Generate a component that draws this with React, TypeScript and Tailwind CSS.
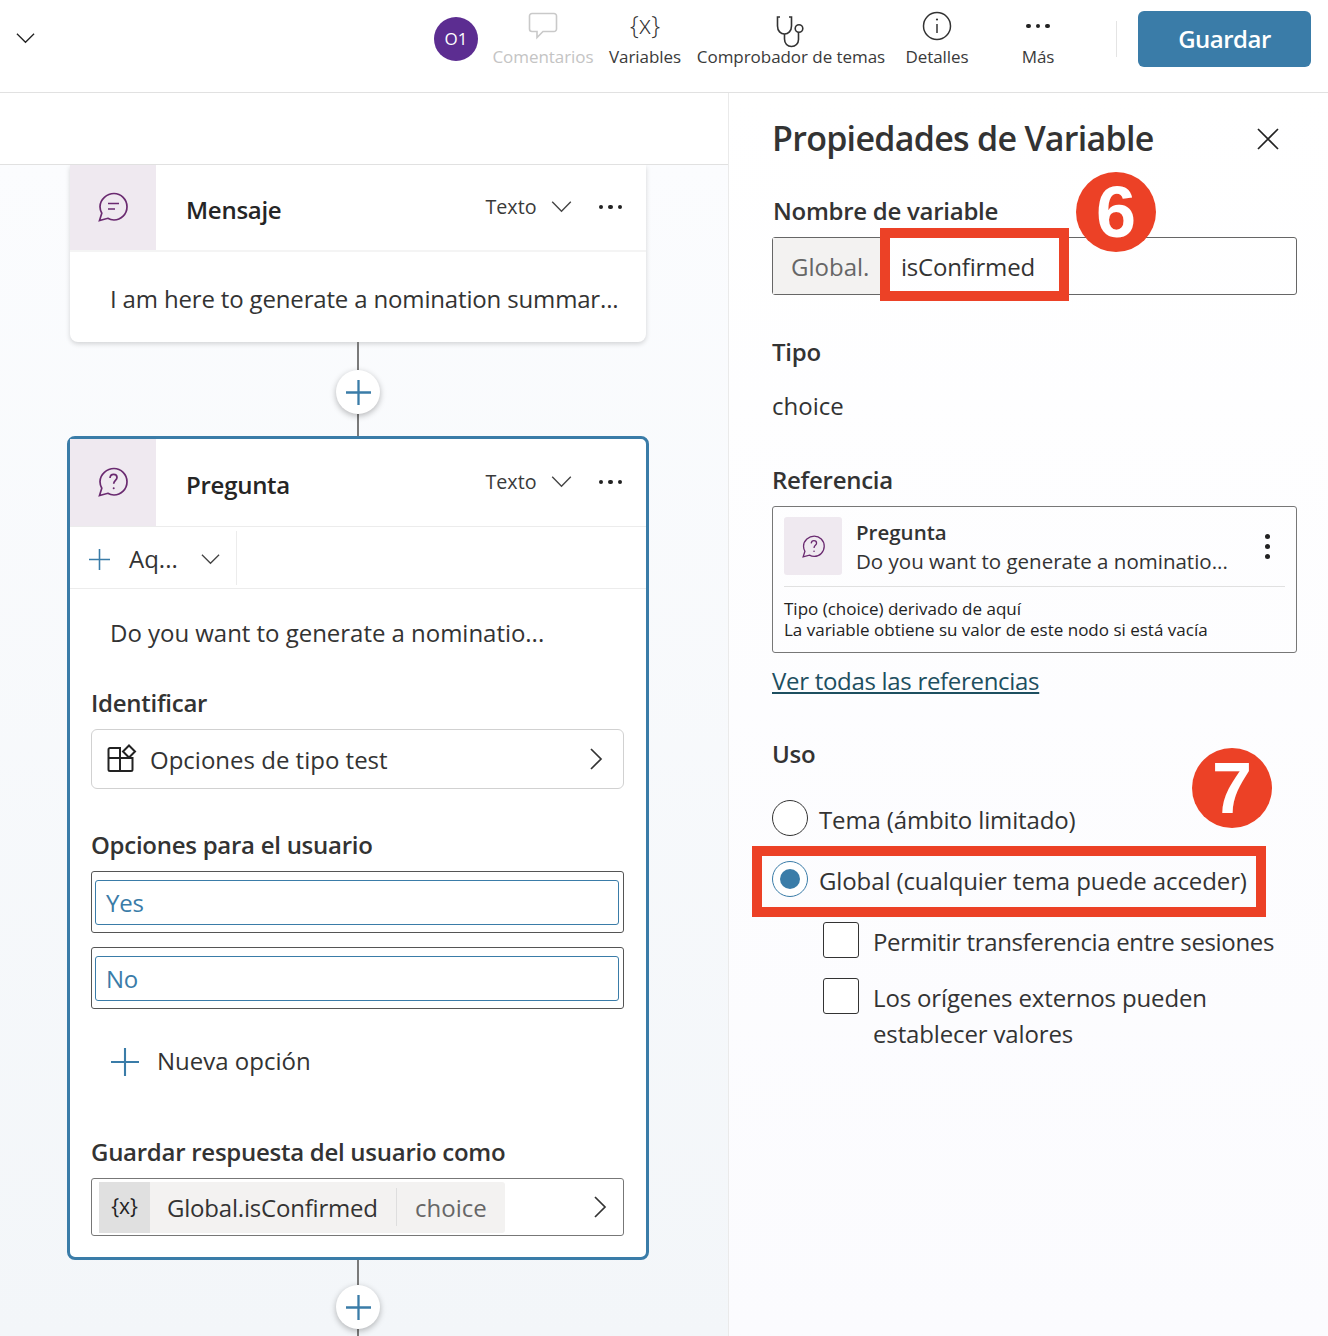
import React from 'react';

const Chevron: React.FC<{ className?: string }> = ({ className }) => (
  <svg viewBox="0 0 24 14" className={className} fill="none" stroke="currentColor" strokeWidth="1.5">
    <path d="M2 2l10 10L22 2" />
  </svg>
);

const ChevronRight: React.FC = () => (
  <svg viewBox="0 0 14 24" className="w-[14px] h-[24px] text-[#333]" fill="none" stroke="currentColor" strokeWidth="1.7">
    <path d="M2 2l10 10L2 22" />
  </svg>
);

const Plus: React.FC<{ className?: string; sw?: string }> = ({ className, sw }) => (
  <svg viewBox="0 0 24 24" className={className} fill="none" stroke="#3a7ca8" strokeWidth={sw ?? '1.8'}>
    <path d="M12 0v24M0 12h24" />
  </svg>
);

const Dots: React.FC = () => (
  <div className="flex gap-[5px]">
    <span className="w-[4.5px] h-[4.5px] rounded-full bg-[#222]" />
    <span className="w-[4.5px] h-[4.5px] rounded-full bg-[#222]" />
    <span className="w-[4.5px] h-[4.5px] rounded-full bg-[#222]" />
  </div>
);

const Bubble: React.FC<{ className?: string; kind: 'msg' | 'ask' }> = ({ className, kind }) => (
  <svg viewBox="0 0 30 30" className={className} fill="none" stroke="#6a2a70" strokeWidth="1.7">
    <path d="M16 1.5c7 0 13 5.8 13 13.2S23 28 16 28c-2.400 0-4.400-.6-6.200-1.700L1.500 28.500l2.300-7.300C2.700 19.300 2 17 2 14.700 2 7.300 9 1.500 16 1.500z" />
    {kind === 'msg' ? (
      <path d="M10 11.500h11M10 17h7" />
    ) : (
      <>
        <path d="M12 11c.2-2.200 1.800-3.600 3.600-3.600 2 0 3.400 1.400 3.400 3.200 0 2.800-3.300 3-3.300 6.200" />
        <circle cx="15.700" cy="21.200" r="1" fill="#6a2a70" stroke="none" />
      </>
    )}
  </svg>
);

const AddButton: React.FC = () => (
  <div className="relative z-10 w-[44px] h-[44px] rounded-full bg-white flex items-center justify-center shadow-[0_2px_6px_rgba(0,0,0,0.28)]">
    <Plus className="w-[25px] h-[25px]" sw="2.200" />
  </div>
);

const Connector: React.FC<{ h: string }> = ({ h }) => <div className={`w-[2px] bg-[#7a7a7a] ${h}`} />;

const ToolItem: React.FC<{ label: string; icon: React.ReactNode; className: string; muted?: boolean }> = ({ label, icon, className, muted }) => (
  <div className={`flex flex-col items-center ${className}`}>
    <div className="h-[36px] mt-[8px] flex items-center justify-center">{icon}</div>
    <span className={`mt-[2px] text-[17px] leading-[22px] tracking-[-0.05px] whitespace-nowrap ${muted ? 'text-[#c4c4c4]' : 'text-[#3a3a3a]'}`}>{label}</span>
  </div>
);

const CardHeader: React.FC<{ title: string; kind: 'msg' | 'ask'; h: string }> = ({ title, kind, h }) => (
  <div className={`flex items-stretch ${h}`}>
    <div className="w-[86px] bg-[#efe9f0] flex items-center justify-center pb-[2px]">
      <Bubble kind={kind} className="w-[30px] h-[30px]" />
    </div>
    <div className="flex-1 flex items-center justify-between pl-[30px] pr-[24px]">
      <span className="text-[24px] font-semibold tracking-[-0.27px] text-[#252525] mt-[4px]">{title}</span>
      <div className="flex items-center mb-[1px]">
        <span className="text-[19.700px] text-[#3a3a3a]">Texto</span>
        <Chevron className="w-[23px] h-[13px] ml-[13px] text-[#444]" />
        <div className="ml-[26px]"><Dots /></div>
      </div>
    </div>
  </div>
);

const SectionLabel: React.FC<{ children: React.ReactNode; className?: string }> = ({ children, className }) => (
  <div className={`text-[24px] leading-[32px] font-semibold tracking-[-0.27px] text-[#333] ${className ?? ''}`}>{children}</div>
);

const OptionInput: React.FC<{ value: string; className?: string }> = ({ value, className }) => (
  <div className={`h-[62px] border border-[#555] rounded-[3px] flex items-center pl-[3px] pr-[4px] ${className ?? ''}`}>
    <div className="flex-1 h-[45px] border border-[#3a7ca8] rounded-[3px] pl-[10px] pt-[1px] flex items-center text-[24px] tracking-[-0.2px] text-[#3a7ca8]">{value}</div>
  </div>
);

const Radio: React.FC<{ on?: boolean }> = ({ on }) => (
  <span className={`w-[36px] h-[36px] shrink-0 rounded-full border flex items-center justify-center bg-white ${on ? 'border-[#3a7ca8]' : 'border-[#333]'}`}>
    {on && <span className="w-[20px] h-[20px] rounded-full bg-[#3a7ca8]" />}
  </span>
);

const Check: React.FC = () => <span className="w-[36px] h-[36px] shrink-0 rounded-[3px] border border-[#333] bg-white" />;

const Badge: React.FC<{ n: string; className: string }> = ({ n, className }) => (
  <div className={`absolute w-[80px] h-[80px] rounded-full bg-[#ec4126] text-white flex items-center justify-center font-['Liberation_Sans'] font-bold text-[72px] leading-none ${className}`}>
    {n}
  </div>
);

export default function App() {
  return (
    <div className="w-[1328px] h-[1336px] overflow-hidden flex flex-col bg-white font-['Open_Sans','Noto_Sans',sans-serif] text-[#333]">
      {/* top bar */}
      <header className="h-[93px] shrink-0 border-b border-[#e1e1e1] flex items-start">
        <Chevron className="w-[21px] h-[12px] mt-[32px] ml-[15px] text-[#222]" />
        <div className="ml-[398px] mt-[17px] w-[44px] h-[44px] rounded-full bg-[#5c2d91] text-white flex items-center justify-center text-[17px]">O1</div>
        <ToolItem
          muted
          label="Comentarios"
          className="w-[102px] ml-[14px]"
          icon={
            <svg viewBox="0 0 30 28" className="w-[30px] h-[28px]" fill="none" stroke="#c9c9c9" strokeWidth="1.6">
              <path d="M4 1.500h22a2.500 2.500 0 0 1 2.500 2.500v13a2.500 2.500 0 0 1-2.500 2.500H15l-6 6v-6H4A2.500 2.500 0 0 1 1.500 17V4A2.500 2.500 0 0 1 4 1.500z" />
            </svg>
          }
        />
        <ToolItem
          label="Variables"
          className="w-[72px] ml-[15px]"
          icon={<span className="text-[25px] leading-none text-[#333] mb-[4px] font-light">{'{x}'}</span>}
        />
        <ToolItem
          label="Comprobador de temas"
          className="w-[190px] ml-[15px]"
          icon={
            <svg viewBox="0 0 32 34" className="w-[32px] h-[34px] mt-[12px]" fill="none" stroke="#333" strokeWidth="1.6">
              <path d="M5 2H2.500v9c0 5 3.200 8 7 8s7-3 7-8V2H14" />
              <path d="M9.500 19v5c0 4.500 3 7.500 7 7.500s7-3 7-7V17" />
              <circle cx="24" cy="13.500" r="3.800" />
            </svg>
          }
        />
        <ToolItem
          label="Detalles"
          className="w-[64px] ml-[19px]"
          icon={
            <svg viewBox="0 0 30 30" className="w-[30px] h-[30px]" fill="none" stroke="#333" strokeWidth="1.5">
              <circle cx="15" cy="15" r="13.500" />
              <path d="M15 13v9" />
              <circle cx="15" cy="8.500" r="1.100" fill="#333" stroke="none" />
            </svg>
          }
        />
        <ToolItem label="Más" className="w-[40px] ml-[49px]" icon={<Dots />} />
        <div className="w-px h-[36px] bg-[#e4e4e4] mt-[21px] ml-[58px]" />
        <div className="ml-[21px] mt-[11px] w-[173px] h-[56px] rounded-[6px] bg-[#3a7ca8] text-white flex items-center justify-center text-[24px] font-semibold tracking-[-0.5px]">Guardar</div>
      </header>

      <div className="flex-1 flex min-h-0">
        {/* authoring canvas */}
        <main className="w-[729px] shrink-0 border-r border-[#eaeaea] flex flex-col">
          <div className="h-[72px] shrink-0 border-b border-[#e1e1e1]" />
          <div className="flex-1 overflow-hidden bg-linear-to-b from-[#fbfcfe] to-[#f3f6f9] pl-[67px] w-[728px]">
            <div className="w-[582px] flex flex-col items-center">
              <section className="w-[576px] h-[177px] bg-white rounded-b-[8px] shadow-[0_2px_5px_rgba(0,0,0,0.16)] flex flex-col">
                <CardHeader title="Mensaje" kind="msg" h="h-[85px]" />
                <div className="border-t-2 border-[#f4f4f4] flex-1 pl-[40px] pt-[30px] text-[24px] leading-[34px] tracking-[-0.16px] text-[#333] whitespace-nowrap">I am here to generate a nomination summar...</div>
              </section>
              <Connector h="h-[28px]" />
              <AddButton />
              <Connector h="h-[23px]" />
              <section className="w-[582px] h-[824px] -mt-px border-[3px] border-[#3a7ca8] rounded-[8px] bg-white flex flex-col">
                <CardHeader title="Pregunta" kind="ask" h="h-[87px]" />
                <div className="h-[63px] border-y border-[#ececec] flex items-center">
                  <div className="w-[167px] h-[54px] border-r border-[#ececec] flex items-center pl-[19px] pt-[3px]">
                    <Plus className="w-[21px] h-[21px]" />
                    <span className="ml-[19px] text-[24px] text-[#333]">Aq...</span>
                    <Chevron className="w-[21px] h-[12px] ml-[22px] text-[#444]" />
                  </div>
                </div>
                <div className="pl-[40px] pt-[27px] text-[24px] leading-[34px] tracking-[-0.03px] text-[#333]">Do you want to generate a nominatio...</div>
                <div className="pl-[21px] pr-[22px]">
                  <SectionLabel className="mt-[37px]">Identificar</SectionLabel>
                  <div className="mt-[10px] h-[60px] border border-[#d1d1d1] rounded-[6px] flex items-center pl-[15px] pr-[20px]">
                    <svg viewBox="0 0 30 30" className="w-[30px] h-[30px]" fill="none" stroke="#222" strokeWidth="2">
                      <path d="M3 4h10v10H3a1.500 1.500 0 0 1-1.500-1.500V5.500A1.500 1.500 0 0 1 3 4zM1.500 14H13v13H3a1.500 1.500 0 0 1-1.500-1.500zM13 14h12.500v11.500A1.500 1.500 0 0 1 24 27H13z" />
                      <path d="M22 1.500l6 6-6 6-6-6z" />
                    </svg>
                    <span className="ml-[13px] pt-[2px] text-[24px] flex-1 text-[#333]">Opciones de tipo test</span>
                    <ChevronRight />
                  </div>
                  <SectionLabel className="mt-[40px]">Opciones para el usuario</SectionLabel>
                  <OptionInput value="Yes" className="mt-[10px]" />
                  <OptionInput value="No" className="mt-[14px]" />
                  <div className="mt-[35px] h-[36px] flex items-center pl-[20px]">
                    <Plus className="w-[28px] h-[28px]" />
                    <span className="ml-[18px] pb-[2px] text-[24px] text-[#333]">Nueva opción</span>
                  </div>
                  <SectionLabel className="mt-[56px]">Guardar respuesta del usuario como</SectionLabel>
                  <div className="mt-[10px] h-[58px] border border-[#777] rounded-[3px] flex items-center pl-[7px] pr-[16px]">
                    <div className="h-[51px] w-[406px] rounded-[3px] bg-[#f3f2f1] flex items-center">
                      <div className="w-[51px] h-full bg-[#e0e0e0] flex items-center justify-center text-[21px] text-[#222]">{'{x}'}</div>
                      <span className="ml-[17px] w-[229px] pt-[2px] text-[24px] tracking-[-0.2px] text-[#333]">Global.isConfirmed</span>
                      <div className="w-px h-[38px] bg-[#dedede]" />
                      <span className="ml-[18px] pt-[2px] text-[24px] text-[#666]">choice</span>
                    </div>
                    <div className="ml-auto"><ChevronRight /></div>
                  </div>
                </div>
              </section>
              <Connector h="h-[25px]" />
              <AddButton />
              <Connector h="h-[20px]" />
            </div>
          </div>
        </main>

        {/* variable properties pane */}
        <aside className="relative flex-1 bg-linear-to-b from-white to-[#fbfbfe] pl-[43px] pr-[31px]">
          <div className="flex items-center justify-between pt-[21px]">
            <h1 className="text-[34px] leading-[48px] font-semibold tracking-[-0.72px] text-[#333]">Propiedades de Variable</h1>
            <svg viewBox="0 0 24 24" className="w-[24px] h-[24px] mr-[17px] mt-[2px]" fill="none" stroke="#222" strokeWidth="1.700">
              <path d="M2 2l20 20M22 2L2 22" />
            </svg>
          </div>
          <SectionLabel className="mt-[33px] pl-[1px]">Nombre de variable</SectionLabel>
          <div className="mt-[10px] h-[58px] border border-[#666] rounded-[3px] flex items-stretch">
            <div className="w-[108px] bg-[#f3f2f1] flex items-center pl-[18px] pt-[2px] text-[24px] text-[#666]">Global.</div>
            <div className="pl-[20px] pt-[2px] flex items-center text-[24px] tracking-[-0.2px] text-[#333]">isConfirmed</div>
          </div>

          <SectionLabel className="mt-[41px]">Tipo</SectionLabel>
          <div className="mt-[22px] text-[24px] leading-[32px] text-[#333]">choice</div>

          <SectionLabel className="mt-[42px]">Referencia</SectionLabel>
          <div className="mt-[10px] h-[147px] border border-[#777] rounded-[3px] px-[11px] pt-[10px]">
            <div className="flex h-[58px]">
              <div className="w-[58px] rounded-[3px] bg-[#efe9f0] flex items-center justify-center">
                <Bubble kind="ask" className="w-[23px] h-[23px]" />
              </div>
              <div className="ml-[14px] flex-1 mt-[1px]">
                <div className="text-[20.500px] leading-[29px] font-semibold text-[#333]">Pregunta</div>
                <div className="text-[20.500px] leading-[29px] text-[#333]">Do you want to generate a nominatio...</div>
              </div>
              <div className="flex flex-col gap-[5px] mt-[17px] mr-[15px]">
                <span className="w-[5px] h-[5px] rounded-full bg-[#222]" />
                <span className="w-[5px] h-[5px] rounded-full bg-[#222]" />
                <span className="w-[5px] h-[5px] rounded-full bg-[#222]" />
              </div>
            </div>
            <div className="mt-[11px] border-t border-[#e1e1e1] pt-[11px] text-[17px] leading-[21px] text-[#222]">
              <div>Tipo (choice) derivado de aquí</div>
              <div>La variable obtiene su valor de este nodo si está vacía</div>
            </div>
          </div>
          <a className="inline-block mt-[12px] text-[24px] leading-[32px] tracking-[-0.3px] text-[#1d4f60] underline">Ver todas las referencias</a>

          <SectionLabel className="mt-[41px]">Uso</SectionLabel>
          <label className="mt-[30px] flex items-center">
            <Radio />
            <span className="ml-[11px] pt-[3px] text-[24px] leading-[32px] tracking-[-0.14px] text-[#333]">Tema (ámbito limitado)</span>
          </label>
          <label className="mt-[25px] flex items-center">
            <Radio on />
            <span className="ml-[11px] pt-[3px] text-[24px] leading-[32px] tracking-[-0.11px] text-[#333] whitespace-nowrap">Global (cualquier tema puede acceder)</span>
          </label>
          <div className="pl-[51px]">
            <label className="mt-[25px] flex items-center">
              <Check />
              <span className="ml-[14px] pt-[3px] text-[24px] leading-[32px] tracking-[-0.35px] text-[#333] whitespace-nowrap">Permitir transferencia entre sesiones</span>
            </label>
            <label className="mt-[20px] flex items-start">
              <Check />
              <span className="ml-[14px] pt-[2px] text-[24px] leading-[36px] tracking-[-0.14px] text-[#333]">Los orígenes externos pueden establecer valores</span>
            </label>
          </div>

          {/* callouts over the pane */}
          <div className="absolute left-[151px] top-[135px] w-[189px] h-[73px] border-[10px] border-[#ec4126]" />
          <Badge n="6" className="left-[347px] top-[79px]" />
          <div className="absolute left-[23px] top-[753px] w-[514px] h-[71px] border-[10px] border-[#ec4126]" />
          <Badge n="7" className="left-[463px] top-[655px]" />
        </aside>
      </div>
    </div>
  );
}
